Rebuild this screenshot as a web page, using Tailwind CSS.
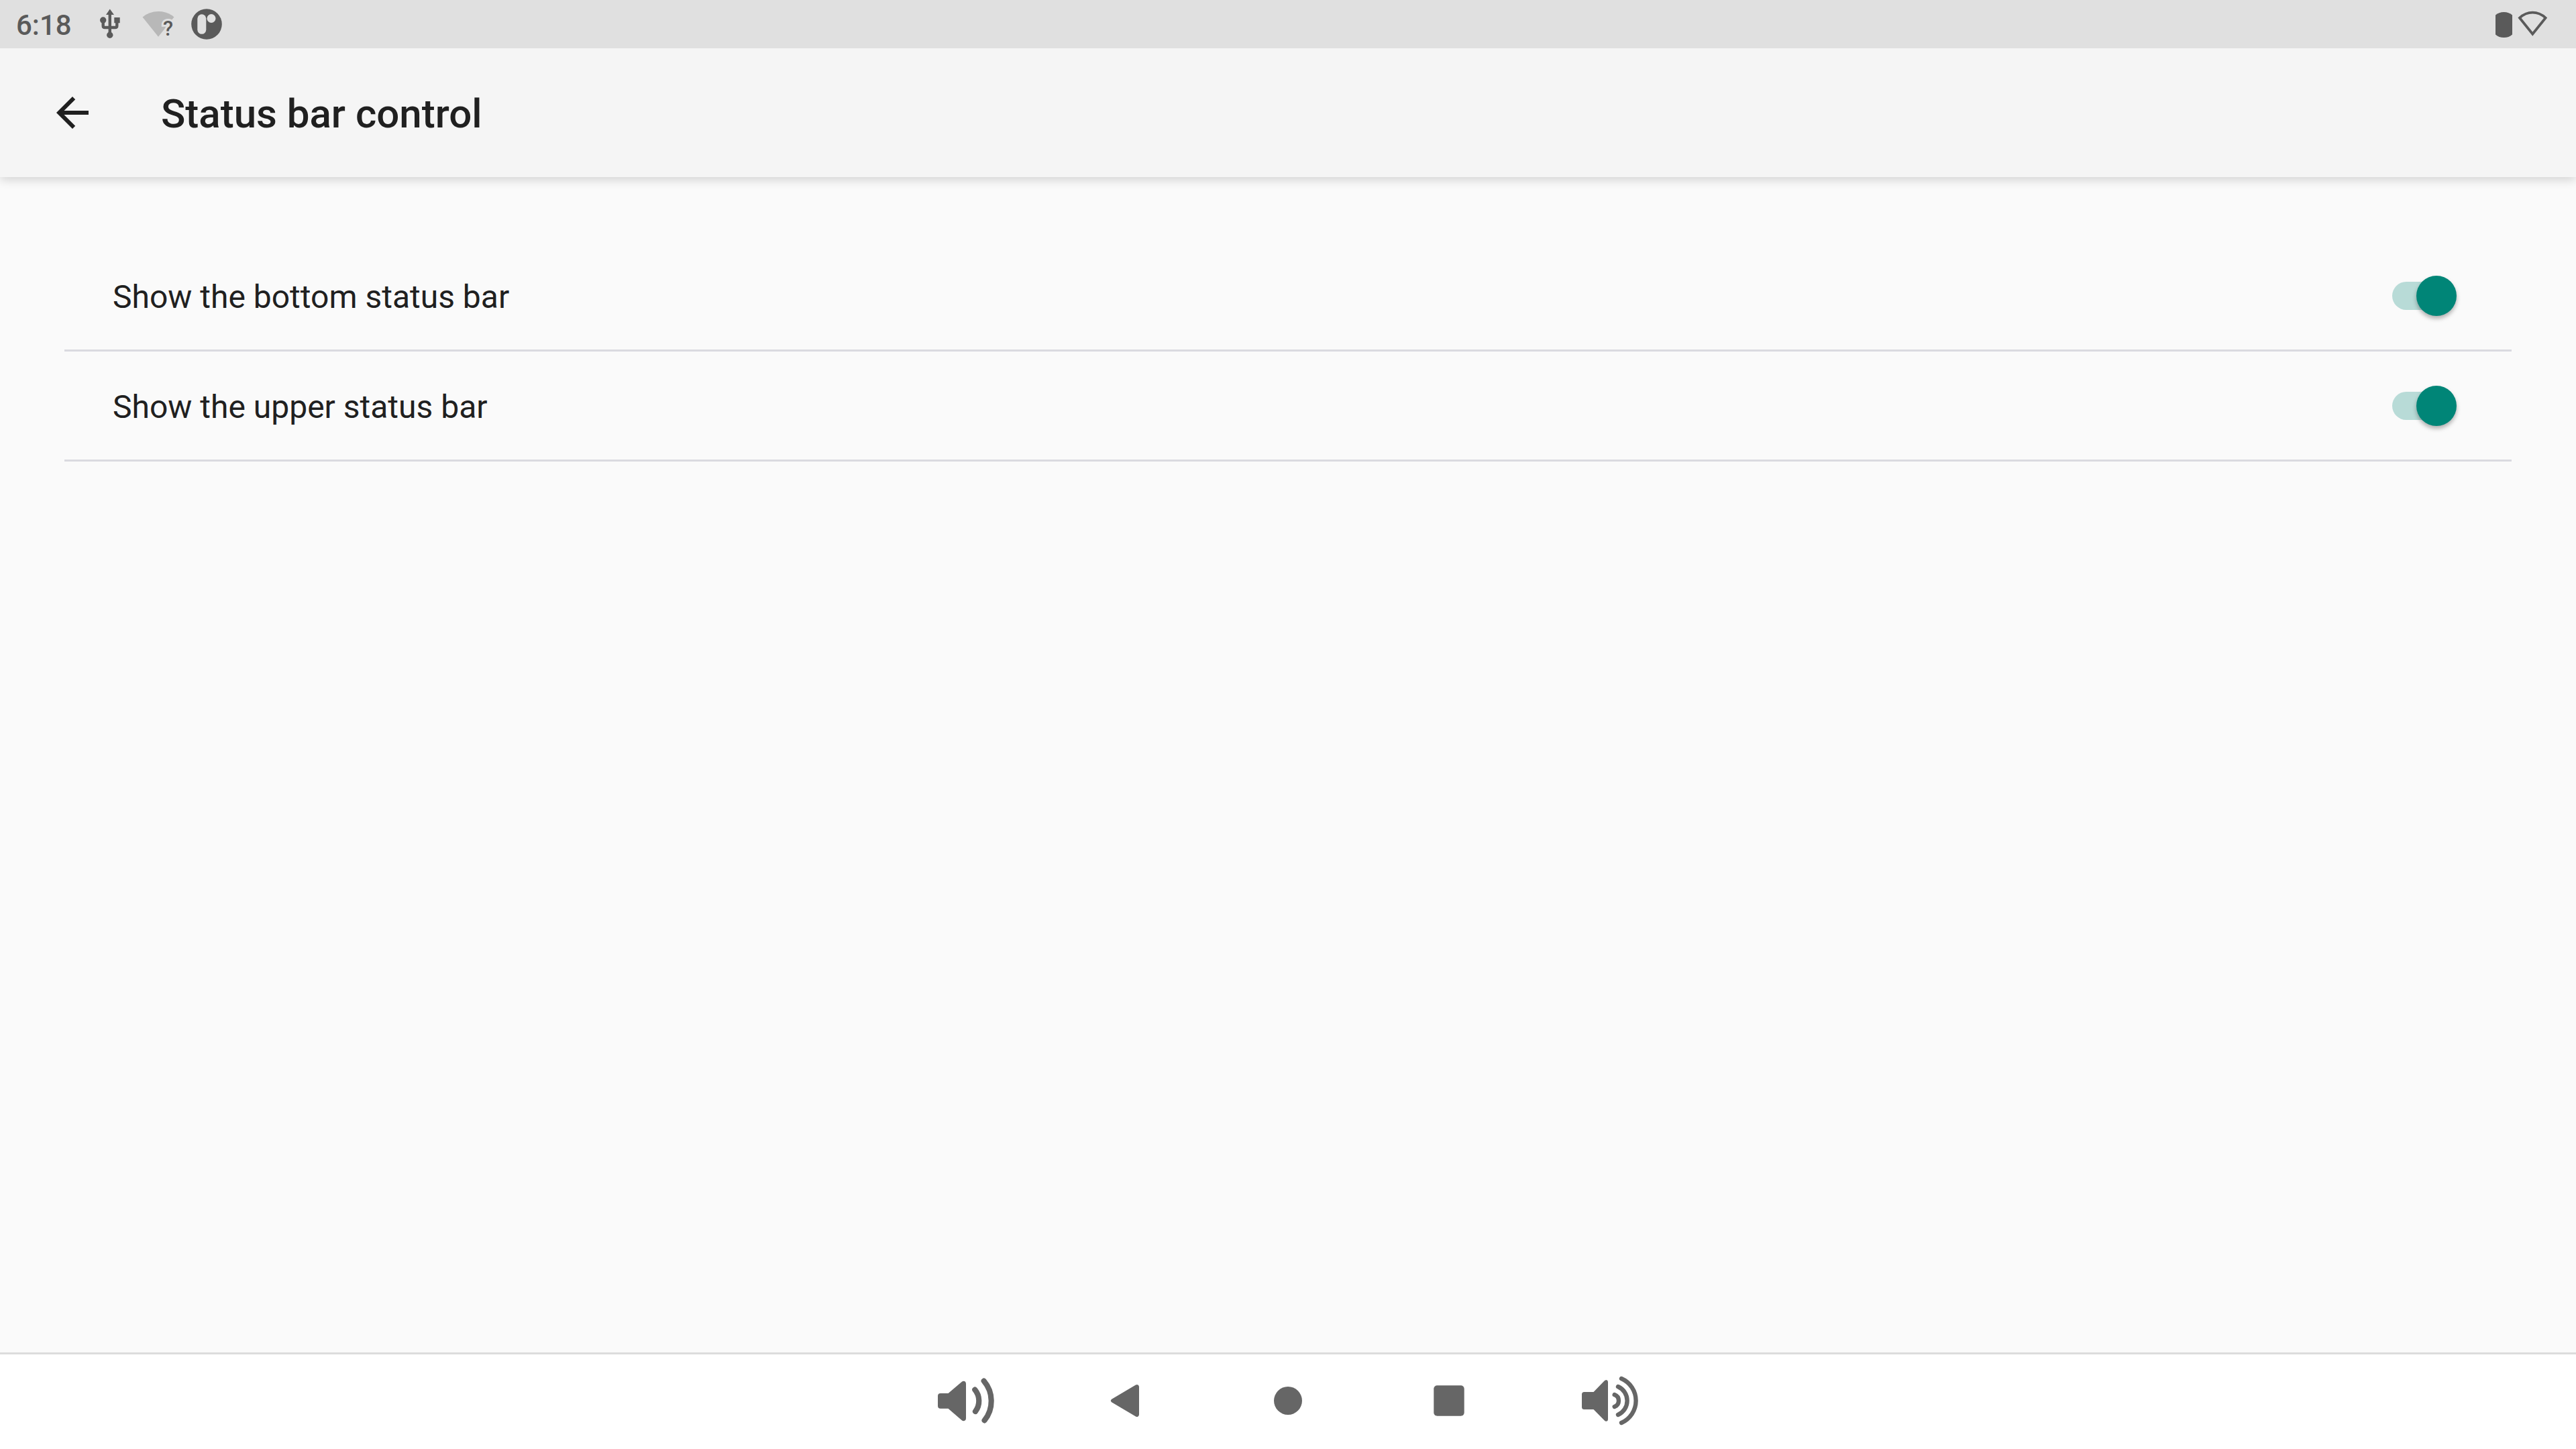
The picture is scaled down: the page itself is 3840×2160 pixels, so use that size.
<!DOCTYPE html>
<html lang="en">
<head>
<meta charset="utf-8">
<meta name="viewport" content="width=device-width, initial-scale=1">
<title>Status bar control</title>
<script src="https://cdn.jsdelivr.net/npm/@tailwindcss/browser@4"></script>
</head>
<body class="flex min-h-screen flex-col bg-[#fafafa] font-[Roboto,sans-serif] text-[#202020]">

  <!-- System status bar -->
  <div class="relative z-10 flex h-[72px] items-center justify-between bg-[#e0e0e0] pl-6 pr-10 text-[#5a5a5a]">
    <div class="flex items-center gap-6">
      <time class="w-[92px] pt-1 text-[42px] leading-[48px] font-medium">6:18</time>
      <!-- USB -->
      <svg class="h-[72px] w-12" viewBox="0 0 48 72" fill="currentColor" aria-label="USB">
        <path d="M23.8 13.5L30 22H18z"/>
        <path d="M23.8 20v32M13.7 30v8.5q0 2.5 2.5 2.5h15.600q2.500 0 2.500-2.500V31" fill="none" stroke="currentColor" stroke-width="4.400"/>
        <circle cx="13.700" cy="30" r="4.700"/>
        <circle cx="23.800" cy="52.300" r="4.700"/>
        <path d="M30.300 26h8.400v8.300h-8.400z"/>
      </svg>
      <!-- Wi-Fi without internet -->
      <svg class="h-[72px] w-12" viewBox="0 0 48 72" aria-label="Wi-Fi, no internet">
        <path d="M.5 25.500Q10.500 17 24 17t23.500 8.500L24 54.800z" fill="#b8b8b8"/>
        <text x="31" y="53" font-size="31" font-weight="500" fill="currentColor" stroke="#e0e0e0" stroke-width="6" paint-order="stroke">?</text>
      </svg>
      <!-- App notification -->
      <svg class="h-[72px] w-12" viewBox="0 0 48 72" aria-label="Notification">
        <circle cx="24" cy="36" r="22.800" fill="currentColor"/>
        <rect x="10.300" y="21.300" width="13" height="29.500" rx="6.500" fill="#e0e0e0"/>
        <circle cx="31" cy="27.500" r="6.500" fill="#e0e0e0"/>
      </svg>
    </div>
    <div class="flex items-center gap-[7px]">
      <!-- Battery -->
      <svg class="h-[72px] w-[25px]" viewBox="0 0 25 72" fill="currentColor" aria-label="Battery">
        <path d="M0 22.500Q5 18 12.500 18T25 22.500v29Q20 56 12.500 56T0 51.500z"/>
      </svg>
      <!-- Wi-Fi -->
      <svg class="h-[72px] w-12" viewBox="0 0 48 72" fill="none" stroke="currentColor" stroke-width="3.800" aria-label="Wi-Fi">
        <path d="M4 26.600Q12.500 18.600 23.300 18.600t19.300 8L23.300 50.800z"/>
      </svg>
    </div>
  </div>

  <!-- App bar -->
  <header class="flex h-[192px] items-center gap-24 bg-[#f5f5f5] px-[72px] shadow-[0_4px_14px_rgba(0,0,0,0.16)]">
    <button type="button" aria-label="Back" class="size-[72px]">
      <svg class="size-full" viewBox="0 0 24 24" fill="currentColor"><path d="M20 11H7.830l5.590-5.590L12 4l-8 8 8 8 1.410-1.410L7.830 13H20v-2z"/></svg>
    </button>
    <h1 class="pt-1 text-[60px] leading-[72px] font-medium">Status bar control</h1>
  </header>

  <!-- Settings list -->
  <main class="flex-1 px-24 pt-24">
    <label class="flex h-[164px] items-center justify-between border-b-[3px] border-[#dadae0] pl-[72px] pr-[82px]">
      <span class="pt-1 text-[48px] leading-[56px]">Show the bottom status bar</span>
      <input type="checkbox" role="switch" checked class="relative h-[60px] w-24 appearance-none before:absolute before:top-[9px] before:left-0 before:h-[42px] before:w-[90px] before:rounded-full before:bg-[#d5d5d5] after:absolute after:top-0 after:left-0 after:size-[60px] after:rounded-full after:bg-[#f1f1f1] after:shadow-[0_4px_6px_rgba(0,0,0,0.3)] checked:before:bg-[#b8dbd7] checked:after:left-9 checked:after:bg-[#008577]">
    </label>
    <label class="flex h-[164px] items-center justify-between border-b-[3px] border-[#dadae0] pl-[72px] pr-[82px]">
      <span class="pt-1 text-[48px] leading-[56px]">Show the upper status bar</span>
      <input type="checkbox" role="switch" checked class="relative h-[60px] w-24 appearance-none before:absolute before:top-[9px] before:left-0 before:h-[42px] before:w-[90px] before:rounded-full before:bg-[#d5d5d5] after:absolute after:top-0 after:left-0 after:size-[60px] after:rounded-full after:bg-[#f1f1f1] after:shadow-[0_4px_6px_rgba(0,0,0,0.3)] checked:before:bg-[#b8dbd7] checked:after:left-9 checked:after:bg-[#008577]">
    </label>
  </main>

  <!-- Navigation bar -->
  <nav class="flex h-36 items-center justify-center gap-36 border-t-[3px] border-[#dcdcdc] bg-white pb-[3px] text-[#666666]">
    <button type="button" aria-label="Volume down" class="size-24">
      <svg class="size-full" viewBox="0 0 96 96" fill="currentColor">
        <path d="M10 37h11.500L41.500 20Q43 18.800 44.500 18.800 48 19 48 23v51q0 4-3.500 4.200-1.500 0-3-1.200l-20-17.300H10q-4 0-4-4V41q0-4 4-4z"/>
        <path d="M61.300 31.700a26 26 0 0 1 .7 32.300M74.700 18.700a46 46 0 0 1 .9 58.600" fill="none" stroke="currentColor" stroke-width="8.200" stroke-linecap="round"/>
      </svg>
    </button>
    <button type="button" aria-label="Back" class="size-24">
      <svg class="size-full" viewBox="0 0 96 96" fill="currentColor"><path d="M25.500 45.500L61 24.500q2-1 3.500 0T66 27.500v41q0 2-1.500 3t-3.500 0L25.500 50.500q-3.500-2.500 0-5z"/></svg>
    </button>
    <button type="button" aria-label="Home" class="size-24">
      <svg class="size-full" viewBox="0 0 96 96" fill="currentColor"><circle cx="48" cy="48" r="21"/></svg>
    </button>
    <button type="button" aria-label="Recent apps" class="size-24">
      <svg class="size-full" viewBox="0 0 96 96" fill="currentColor"><rect x="25.300" y="25.300" width="45.400" height="45.400" rx="5"/></svg>
    </button>
    <button type="button" aria-label="Volume up" class="size-24">
      <svg class="size-full" viewBox="0 0 96 96" fill="currentColor">
        <path d="M9.500 35h14L39.500 18.500Q41 17 42.500 17q2.500.5 2.500 3v56q0 2.500-2.500 2.700-1.500 0-3-1.500L23.500 61h-14Q6 61 6 57.500v-19Q6 35 9.500 35z"/>
        <path d="M54.700 39a9.600 9.600 0 0 1 0 18M60 27a23 23 0 0 1 0 42M65 15a36 36 0 0 1 0 66" fill="none" stroke="currentColor" stroke-width="6.400" stroke-linecap="round"/>
      </svg>
    </button>
  </nav>
</body>
</html>
